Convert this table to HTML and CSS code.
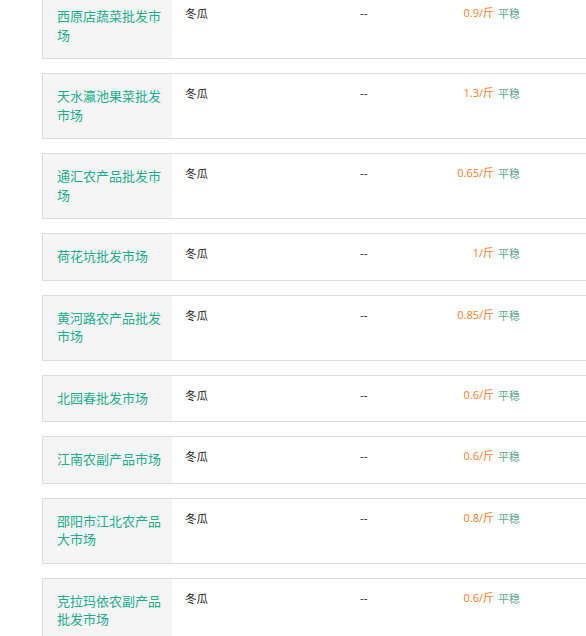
FILE: index.html
```html
<!DOCTYPE html>
<html lang="zh-CN">
<head>
<meta charset="utf-8">
<title>冬瓜价格</title>
<link rel="stylesheet" href="styles.css">
</head>
<body>
<div class="list">
  <div class="row">
    <div class="market">西原店蔬菜批发市场</div>
    <div class="name">冬瓜</div>
    <div class="spec">--</div>
    <div class="price">0.9/斤</div>
    <div class="trend">平稳</div>
  </div>
  <div class="row">
    <div class="market">天水瀛池果菜批发市场</div>
    <div class="name">冬瓜</div>
    <div class="spec">--</div>
    <div class="price">1.3/斤</div>
    <div class="trend">平稳</div>
  </div>
  <div class="row">
    <div class="market">通汇农产品批发市场</div>
    <div class="name">冬瓜</div>
    <div class="spec">--</div>
    <div class="price">0.65/斤</div>
    <div class="trend">平稳</div>
  </div>
  <div class="row">
    <div class="market">荷花坑批发市场</div>
    <div class="name">冬瓜</div>
    <div class="spec">--</div>
    <div class="price">1/斤</div>
    <div class="trend">平稳</div>
  </div>
  <div class="row">
    <div class="market">黄河路农产品批发市场</div>
    <div class="name">冬瓜</div>
    <div class="spec">--</div>
    <div class="price">0.85/斤</div>
    <div class="trend">平稳</div>
  </div>
  <div class="row">
    <div class="market">北园春批发市场</div>
    <div class="name">冬瓜</div>
    <div class="spec">--</div>
    <div class="price">0.6/斤</div>
    <div class="trend">平稳</div>
  </div>
  <div class="row">
    <div class="market">江南农副产品市场</div>
    <div class="name">冬瓜</div>
    <div class="spec">--</div>
    <div class="price">0.6/斤</div>
    <div class="trend">平稳</div>
  </div>
  <div class="row">
    <div class="market">邵阳市江北农产品大市场</div>
    <div class="name">冬瓜</div>
    <div class="spec">--</div>
    <div class="price">0.8/斤</div>
    <div class="trend">平稳</div>
  </div>
  <div class="row">
    <div class="market">克拉玛依农副产品批发市场</div>
    <div class="name">冬瓜</div>
    <div class="spec">--</div>
    <div class="price">0.6/斤</div>
    <div class="trend">平稳</div>
  </div>
</div>
</body>
</html>
```

FILE: styles.css
```css
html {
  overflow: hidden;
}

body {
  margin: 0;
  background: #fff;
  font-family: "Open Sans", "Noto Sans CJK SC", sans-serif;
  color: #222;
}

.list {
  margin-top: -7px;
  padding-left: 42px;
}

.row {
  display: grid;
  grid-template-columns: 129px 175px 90px 57px 1fr;
  align-items: start;
  border: 1px solid #dcdcdc;
  border-right: none;
  margin-bottom: 14px;
  background: #fff;
}

.market {
  align-self: stretch;
  background: #f5f5f5;
  color: #1aae8b;
  font-size: 13px;
  line-height: 18.5px;
  padding: 13px 8px 14px 14px;
  font-family: "Noto Sans CJK SC", sans-serif;
}

.name,
.spec,
.price,
.trend {
  font-size: 11.5px;
  line-height: 16px;
  padding-top: 11px;
}

.name {
  padding-left: 13px;
  color: #222;
  font-family: "Noto Sans CJK SC", sans-serif;
}

.spec {
  padding-left: 13px;
  color: #222;
}

.price {
  text-align: right;
  color: #ff7a1f;
  font-size: 11px;
}

.trend {
  padding-left: 4px;
  color: #5ea98b;
  font-size: 11px;
  font-family: "Noto Sans CJK SC", sans-serif;
}
```
